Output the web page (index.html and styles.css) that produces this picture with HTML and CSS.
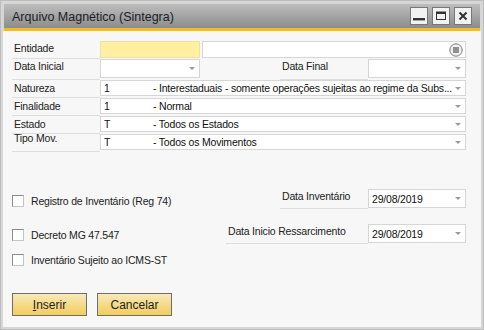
FILE: index.html
```html
<!DOCTYPE html>
<html lang="pt-BR">
<head>
    <meta charset="UTF-8">
    <title>Arquivo Magnético (Sintegra)</title>
    <link rel="stylesheet" href="styles.css">
</head>
<body>
    <div class="window">
        <!-- Barra de titulo -->
        <div class="titlebar">
            <span class="title">Arquivo Magnético (Sintegra)</span>
            <div class="win-btns">
                <span class="win-btn">
                    <svg width="14" height="14" viewBox="0 0 14 14"><rect x="1" y="9" width="12" height="2.4" fill="#333"/></svg>
                </span>
                <span class="win-btn">
                    <svg width="14" height="14" viewBox="0 0 14 14"><rect x="2.5" y="3" width="9" height="7.5" fill="none" stroke="#333" stroke-width="1"/><rect x="2.5" y="3" width="9" height="2" fill="#333"/></svg>
                </span>
                <span class="win-btn">
                    <svg width="14" height="14" viewBox="0 0 14 14"><path d="M3.5 3.5 L10.5 10.5 M10.5 3.5 L3.5 10.5" stroke="#333" stroke-width="2"/></svg>
                </span>
            </div>
        </div>

        <div class="content">
            <div class="row r1">
                <div class="lbl">Entidade</div>
                <div class="field yellow w-short"></div>
                <div class="field w-long end">
                    <svg class="menu-icon" width="14" height="14" viewBox="0 0 14 14">
                        <circle cx="7" cy="7" r="6.2" fill="#f0f0f0" stroke="#7a7a7a" stroke-width="1"/>
                        <path d="M4 5 H10 M4 7 H10 M4 9 H10" stroke="#333" stroke-width="1"/>
                    </svg>
                </div>
            </div>

            <div class="row r2">
                <div class="lbl">Data Inicial</div>
                <div class="field combo w-short"><span></span><span class="arrow"></span></div>
                <div class="spacer"></div>
                <div class="lbl">Data Final</div>
                <div class="field combo w-date"><span></span><span class="arrow"></span></div>
            </div>

            <div class="row r3">
                <div class="lbl">Natureza</div>
                <div class="field combo w-full">
                    <span class="val"><span class="code">1</span>- Interestaduais - somente operações sujeitas ao regime da Subs...</span>
                    <span class="arrow"></span>
                </div>
            </div>

            <div class="row r3">
                <div class="lbl">Finalidade</div>
                <div class="field combo w-full">
                    <span class="val"><span class="code">1</span>- Normal</span>
                    <span class="arrow"></span>
                </div>
            </div>

            <div class="row r3">
                <div class="lbl">Estado</div>
                <div class="field combo w-full">
                    <span class="val"><span class="code">T</span>- Todos os Estados</span>
                    <span class="arrow"></span>
                </div>
            </div>

            <div class="row r3">
                <div class="lbl lbl-raised"><span>Tipo Mov.</span></div>
                <div class="field combo w-full">
                    <span class="val"><span class="code">T</span>- Todos os Movimentos</span>
                    <span class="arrow"></span>
                </div>
            </div>

            <div class="lower">
                <div class="checks">
                    <label class="check c1"><span class="box"></span>Registro de Inventário (Reg 74)</label>
                    <label class="check c2"><span class="box"></span>Decreto MG 47.547</label>
                    <label class="check c3"><span class="box"></span>Inventário Sujeito ao ICMS-ST</label>
                </div>
                <div class="dates">
                    <div class="row d1">
                        <div class="lbl">Data Inventário</div>
                        <div class="field combo w-date tall"><span class="val">29/08/2019</span><span class="arrow"></span></div>
                    </div>
                    <div class="row d2">
                        <div class="lbl lbl-wide">Data Inicio Ressarcimento</div>
                        <div class="field combo w-date tall"><span class="val">29/08/2019</span><span class="arrow"></span></div>
                    </div>
                </div>
            </div>

            <div class="buttons">
                <button class="btn"><u>I</u>nserir</button>
                <button class="btn">Cancelar</button>
            </div>
        </div>
    </div>
</body>
</html>
```

FILE: styles.css
```css
/* Global */
* {
    box-sizing: border-box;
    margin: 0;
    padding: 0;
}

body {
    font-family: 'Liberation Sans', Arial, sans-serif;
    font-size: 10.5px;
    letter-spacing: -0.2px;
    color: #1e1e1e;
    background: #fff;
}

/* Janela */
.window {
    width: 484px;
    height: 330px;
    background: #d6d6d6;
    border: 1px solid #bdbdbd;
    padding: 3px 2px 2px 2px;
    display: flex;
    flex-direction: column;
}

.titlebar {
    height: 27px;
    margin: 0 1px 0 1px;
    background: linear-gradient(#bdbdbd, #8c8c8c);
    border-bottom: 3px solid #f5bd1c;
    display: flex;
    align-items: center;
    justify-content: space-between;
    padding: 0 8px 0 8px;
}

.title {
    font-size: 12.5px;
    letter-spacing: 0;
    color: #1c1c28;
    margin-top: 1px;
}

.win-btns {
    display: flex;
    gap: 4px;
    margin-top: -1px;
}

.win-btn {
    width: 18px;
    height: 18px;
    background: #f2f2f2;
    border: 1px solid #787878;
    display: flex;
    align-items: center;
    justify-content: center;
}

/* Conteudo */
.content {
    flex: 1;
    background: #f7f7f7;
    padding: 10px 15px 0 9px;
}

.row {
    display: flex;
    align-items: flex-start;
}

.lbl {
    width: 88px;
    height: 18px;
    border-bottom: 1px solid #dedede;
    line-height: 14px;
    padding-left: 2px;
    color: #222;
    flex-shrink: 0;
}

.lbl-wide {
    width: 142px;
}

.r2 .lbl {
    height: 21px;
}

.r3 .lbl {
    height: 18px;
    line-height: 17px;
}

.lbl-raised span {
    display: block;
    line-height: 12px;
    margin-top: -2px;
}

.field {
    height: 17px;
    background: #fff;
    border: 1px solid #d6d6d6;
    display: flex;
    align-items: center;
    flex-shrink: 0;
}

.r2 .field {
    height: 19px;
}

.r3 .field {
    height: 16px;
}

.field.tall {
    height: 19px;
}

.yellow {
    background: #fef0a0;
    border-color: #ebe2a6;
}

.w-short { width: 100px; }
.w-long { width: 264px; margin-left: 2px; }
.w-date { width: 98px; }
.w-full { width: 366px; }

.spacer {
    width: 81px;
}

.end {
    justify-content: flex-end;
    padding-right: 2px;
}

.combo {
    justify-content: space-between;
    padding: 0 4px 0 3px;
}

.val {
    white-space: nowrap;
    overflow: hidden;
    color: #111;
}

.code {
    display: inline-block;
    width: 49px;
}

.arrow {
    width: 0;
    height: 0;
    border-left: 3px solid transparent;
    border-right: 3px solid transparent;
    border-top: 3px solid #9a9a9a;
    flex-shrink: 0;
}

/* Parte inferior */
.lower {
    display: flex;
    justify-content: space-between;
}

.checks {
    display: flex;
    flex-direction: column;
}

.check {
    display: flex;
    align-items: center;
    gap: 7px;
    height: 14px;
    color: #222;
}

.c1 { margin-top: 42px; }
.c2 { margin-top: 20px; }
.c3 { margin-top: 11px; }

.box {
    width: 12px;
    height: 12px;
    background: #fff;
    border: 1px solid #8c8c8c;
    border-right-color: #c4c4c4;
    border-bottom-color: #c4c4c4;
}

.dates {
    display: flex;
    flex-direction: column;
    align-items: flex-end;
    padding-top: 37px;
    gap: 15px;
}

.dates .lbl {
    height: 20px;
}

/* Botoes */
.buttons {
    display: flex;
    gap: 10px;
    margin-top: 26px;
}

.btn {
    width: 75px;
    height: 23px;
    font-family: 'Liberation Sans', Arial, sans-serif;
    font-size: 12px;
    color: #1e1e1e;
    background: linear-gradient(#f8e9b8, #f2cd5c);
    border: 1px solid #6e6e6e;
}
```
